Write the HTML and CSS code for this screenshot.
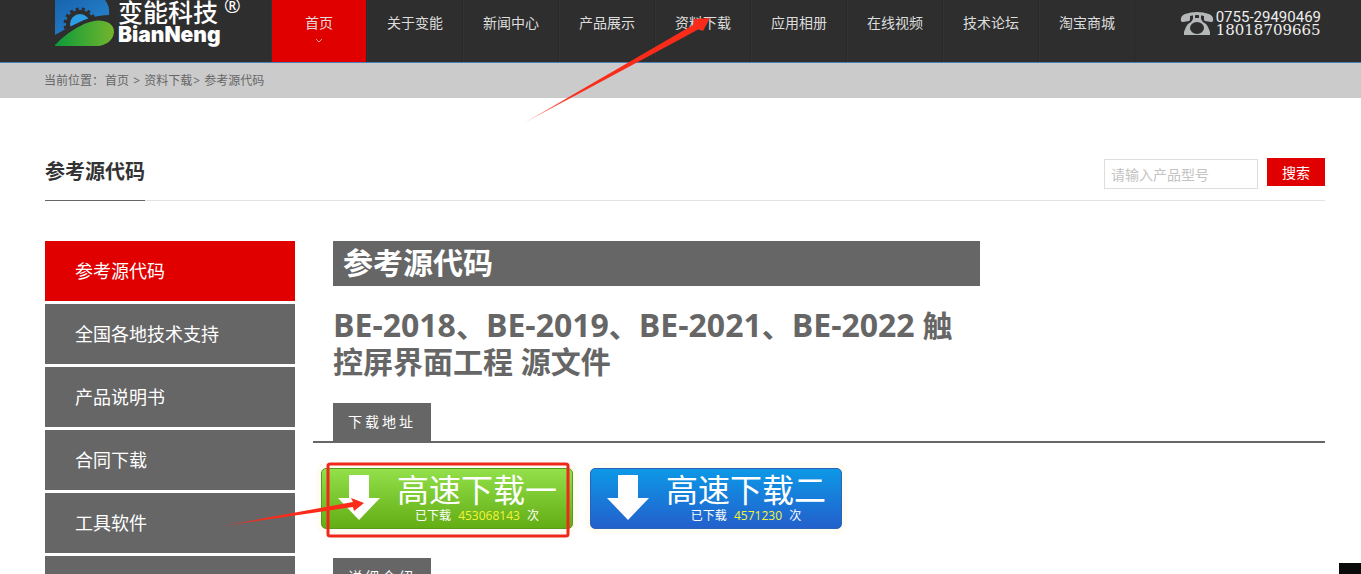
FILE: index.html
```html
<!DOCTYPE html>
<html lang="zh-CN">
<head>
    <meta charset="UTF-8">
    <title>参考源代码</title>
    <link rel="stylesheet" href="styles.css">
</head>
<body>
    <header class="header">
        <a href="#" class="logo">
            <svg class="logo_icon" viewBox="0 0 60 46" width="60" height="46" aria-hidden="true">
                <defs>
                    <linearGradient id="logoBlue" x1="0" y1="0" x2="1" y2="1">
                        <stop offset="0" stop-color="#1763ae"/>
                        <stop offset="1" stop-color="#2a8ad2"/>
                    </linearGradient>
                    <linearGradient id="logoGreen" x1="0" y1="0" x2="1" y2="0">
                        <stop offset="0" stop-color="#0b9a3a"/>
                        <stop offset="1" stop-color="#72b52c"/>
                    </linearGradient>
                </defs>
                <path d="M0 0H50Q55 6 54 15L40 30L0 35Z" fill="url(#logoBlue)"/>
                <circle cx="25" cy="24" r="12" fill="#2b9fe6" stroke="#2e2e2e" stroke-width="4"/>
                <circle cx="25" cy="24" r="15" fill="none" stroke="#2e2e2e" stroke-width="3" stroke-dasharray="3 3"/>
                <path d="M0 35Q13 27 29 20Q42 15 56 15V46H0Z" fill="#2e2e2e"/>
                <path d="M0 45Q12 32 29 24Q43 18 52 22Q59 25 59 32Q58 43 44 46H0Z" fill="url(#logoGreen)"/>
            </svg>
            <span class="logo_text">
                <span class="logo_cn">变能科技<span class="logo_reg">®</span></span>
                <span class="logo_en">BianNeng</span>
            </span>
        </a>
        <nav>
            <ul class="nav">
                <li class="nav_on">
                    <a href="#">首页
                        <svg class="nav_arrow" viewBox="0 0 8 5" width="8" height="5" aria-hidden="true"><path d="M1 1L4 4L7 1" fill="none" stroke="#f4a0a0"/></svg>
                    </a>
                </li>
                <li><a href="#">关于变能</a></li>
                <li><a href="#">新闻中心</a></li>
                <li><a href="#">产品展示</a></li>
                <li><a href="#">资料下载</a></li>
                <li><a href="#">应用相册</a></li>
                <li><a href="#">在线视频</a></li>
                <li><a href="#">技术论坛</a></li>
                <li><a href="#">淘宝商城</a></li>
            </ul>
        </nav>
        <div class="tel">
            <svg viewBox="0 0 34 24" width="34" height="24" aria-hidden="true">
                <path d="M1 10Q0 5 5 3Q17 -1 29 3Q34 5 33 10Q33 11 31 11L25 10Q24 10 24 8V5Q17 3 10 5V8Q10 10 9 10L3 11Q1 11 1 10Z" fill="#b5b8b8"/>
                <path d="M13 4H15V7H19V4H21V8Q22 11 26 13Q28 15 30 21V24H4V21Q6 15 8 13Q12 11 13 8Z" fill="#b5b8b8"/>
                <ellipse cx="17" cy="17" rx="7" ry="6" fill="#2e2e2e"/>
            </svg>
            <p class="tel_number">
                <span>0755-29490469</span>
                <span class="tel_mobile">18018709665</span>
            </p>
        </div>
    </header>

    <div class="crumbs">
        当前位置：<a href="#">首页</a> &gt; <a href="#">资料下载</a>&gt; <a href="#">参考源代码</a>
    </div>

    <div class="wrap">
        <div class="top">
            <h2 class="top_title">参考源代码</h2>
            <form class="search">
                <input type="text" class="search_input" placeholder="请输入产品型号" aria-label="请输入产品型号">
                <button type="submit" class="search_btn">搜索</button>
            </form>
        </div>

        <div class="content">
            <ul class="side">
                <li><a href="#" class="side_on">参考源代码</a></li>
                <li><a href="#">全国各地技术支持</a></li>
                <li><a href="#">产品说明书</a></li>
                <li><a href="#">合同下载</a></li>
                <li><a href="#">工具软件</a></li>
                <li><a href="#" aria-label="更多"></a></li>
            </ul>

            <main class="main">
                <div class="intro">
                    <h3 class="intro_type">参考源代码</h3>
                    <h1 class="intro_name"><span>BE-2018</span>、<span>BE-2019</span>、<span>BE-2021</span>、<span>BE-2022</span> 触控屏界面工程 源文件</h1>
                </div>
                <div class="tab"><h4>下载地址</h4></div>
                <div class="downs">
                    <a href="#" class="down down_green">
                        <svg viewBox="0 0 42 45" width="42" height="45" aria-hidden="true"><path d="M11 0H31V23H42L21 45L0 23H11Z" fill="#fff"/></svg>
                        <span class="down_text">
                            <strong>高速下载一</strong>
                            <span class="down_count">已下载 <em>453068143</em> 次</span>
                        </span>
                    </a>
                    <a href="#" class="down down_blue">
                        <svg viewBox="0 0 42 45" width="42" height="45" aria-hidden="true"><path d="M11 0H31V23H42L21 45L0 23H11Z" fill="#fff"/></svg>
                        <span class="down_text">
                            <strong>高速下载二</strong>
                            <span class="down_count">已下载 <em>4571230</em> 次</span>
                        </span>
                    </a>
                </div>
                <div class="tab"><h4>详细介绍</h4></div>
            </main>
        </div>
    </div>

    <!-- 标注 -->
    <svg class="marks" width="720" height="560" viewBox="0 0 720 560" aria-hidden="true">
        <defs>
            <linearGradient id="tailTop" gradientUnits="userSpaceOnUse" x1="525" y1="123" x2="575" y2="95">
                <stop offset="0" stop-color="#fa2c19" stop-opacity=".4"/>
                <stop offset="1" stop-color="#fa2c19"/>
            </linearGradient>
            <linearGradient id="tailLow" gradientUnits="userSpaceOnUse" x1="218" y1="527" x2="270" y2="519">
                <stop offset="0" stop-color="#fa2c19" stop-opacity=".3"/>
                <stop offset="1" stop-color="#fa2c19"/>
            </linearGradient>
        </defs>
        <path d="M524 123L693 25L694 19L710 18L703 31L699 29L636 63Z" fill="url(#tailTop)"/>
        <rect x="328" y="464" width="240" height="72" rx="2" fill="none" stroke="#f0281c" stroke-width="3"/>
        <path d="M216 527L353 502L351 498L364 503L354 511L353 507Z" fill="url(#tailLow)"/>
    </svg>
    <div class="corner"></div>
</body>
</html>
```

FILE: styles.css
```css
*{
    box-sizing: border-box;
}
body,ul,p,h1,h2,h3,h4{
    margin: 0;
    padding: 0;
}
body{
    background: #fff;
    color: #666;
    font-family: "Open Sans","Noto Sans CJK SC",sans-serif;
    font-size: 14px;
}
ul{
    list-style: none;
}
a{
    color: inherit;
    text-decoration: none;
}
.header{
    display: flex;
    height: 63px;
    padding-left: 55px;
    padding-right: 40px;
    background: #2e2e2e;
    border-bottom: 1px solid #4a7fb5;
}
.logo{
    display: flex;
    width: 216px;
    flex: none;
    gap: 3px;
    color: #fff;
}
.logo_icon{
    flex: none;
}
.logo_text{
    display: flex;
    flex-direction: column;
}
.logo_cn{
    display: flex;
    gap: 6px;
    font-size: 25px;
    font-weight: 500;
    line-height: 24px;
}
.logo_reg{
    font-size: 20px;
    line-height: 12px;
}
.logo_en{
    font-family: Inter,sans-serif;
    font-size: 21px;
    font-weight: 900;
    line-height: 22px;
}
.nav{
    display: flex;
}
.nav li{
    width: 96px;
    border-left: 1px solid #333;
    border-right: 1px solid #292929;
}
.nav a{
    display: flex;
    flex-direction: column;
    align-items: center;
    height: 62px;
    padding-top: 12px;
    color: #ddd;
    line-height: 22px;
}
.nav .nav_on a{
    background: #e00000;
}
.nav_arrow{
    margin-top: 4px;
}
.tel{
    display: flex;
    gap: 2px;
    margin-left: auto;
    padding-top: 11px;
}
.tel_number{
    display: flex;
    flex-direction: column;
    color: #eee;
    font-family: Roboto,sans-serif;
    font-size: 15px;
    line-height: 13px;
}
.tel_mobile{
    font-family: "DejaVu Serif",serif;
}
.crumbs{
    height: 35px;
    padding-left: 44px;
    background: #cbcbcb;
    font-size: 12px;
    line-height: 35px;
}
.crumbs a{
    margin: 0 1px;
}
.wrap{
    padding: 60px 36px 0 45px;
}
.top{
    display: flex;
    justify-content: space-between;
    height: 43px;
    border-bottom: 1px solid #e2e2e2;
}
.top_title{
    height: 43px;
    border-bottom: 1px solid #666;
    color: #333;
    font-size: 20px;
    line-height: 28px;
}
.search{
    display: flex;
    gap: 9px;
}
.search_input{
    width: 154px;
    height: 30px;
    margin-top: 1px;
    padding: 0 6px;
    border: 1px solid #ddd;
    font-family: inherit;
    font-size: 14px;
}
.search_input::placeholder{
    color: #c3c3c3;
}
.search_btn{
    width: 58px;
    height: 28px;
    padding: 0;
    border: 0;
    background: #e00000;
    color: #fff;
    font-family: inherit;
    font-size: 14px;
}
.content{
    display: flex;
    gap: 18px;
    padding-top: 40px;
}
.side{
    display: flex;
    flex-direction: column;
    flex: none;
    gap: 3px;
    width: 250px;
}
.side a{
    display: block;
    height: 60px;
    padding-left: 30px;
    background: #666;
    color: #fff;
    font-size: 18px;
    line-height: 60px;
}
.side .side_on{
    background: #e00000;
}
.main{
    flex: 1;
}
.intro{
    max-width: 667px;
    padding-left: 20px;
}
.intro_type{
    height: 45px;
    padding-left: 10px;
    background: #666;
    color: #fff;
    font-size: 30px;
    line-height: 43px;
}
.intro_name{
    padding: 21px 0 23px;
    font-size: 30px;
    line-height: 36px;
}
.intro_name span{
    font-size: 32px;
}
.tab{
    display: flex;
    height: 40px;
    padding-left: 20px;
    border-bottom: 2px solid #666;
}
.tab h4{
    padding: 0 15px;
    background: #666;
    color: #fff;
    font-size: 14px;
    font-weight: normal;
    letter-spacing: 3px;
    line-height: 38px;
}
.downs{
    display: flex;
    gap: 17px;
    padding: 25px 0 29px 8px;
}
.down{
    display: flex;
    width: 252px;
    height: 61px;
    gap: 17px;
    padding: 6px 0 6px 16px;
    border: 1px solid;
    border-radius: 5px;
    box-shadow: 0 0 0 5px #fffdf3;
    color: #fff;
    white-space: nowrap;
}
.down_green{
    border-color: #5a9a1c;
    background: linear-gradient(#92e04a,#63ad15);
}
.down_blue{
    border-color: #2a62b8;
    background: linear-gradient(#0d98e6,#2360cc);
}
.down_text{
    display: flex;
    flex-direction: column;
    align-items: center;
}
.down strong{
    font-size: 32px;
    font-weight: normal;
    line-height: 30px;
}
.down_count{
    font-size: 12px;
    line-height: 22px;
}
.down em{
    margin: 0 4px;
    color: #f4f434;
    font-style: normal;
}
.marks{
    position: absolute;
    top: 0;
    left: 0;
    pointer-events: none;
}
.corner{
    position: fixed;
    right: 0;
    bottom: 0;
    width: 22px;
    height: 11px;
    background: #0a0a0a;
}
```
